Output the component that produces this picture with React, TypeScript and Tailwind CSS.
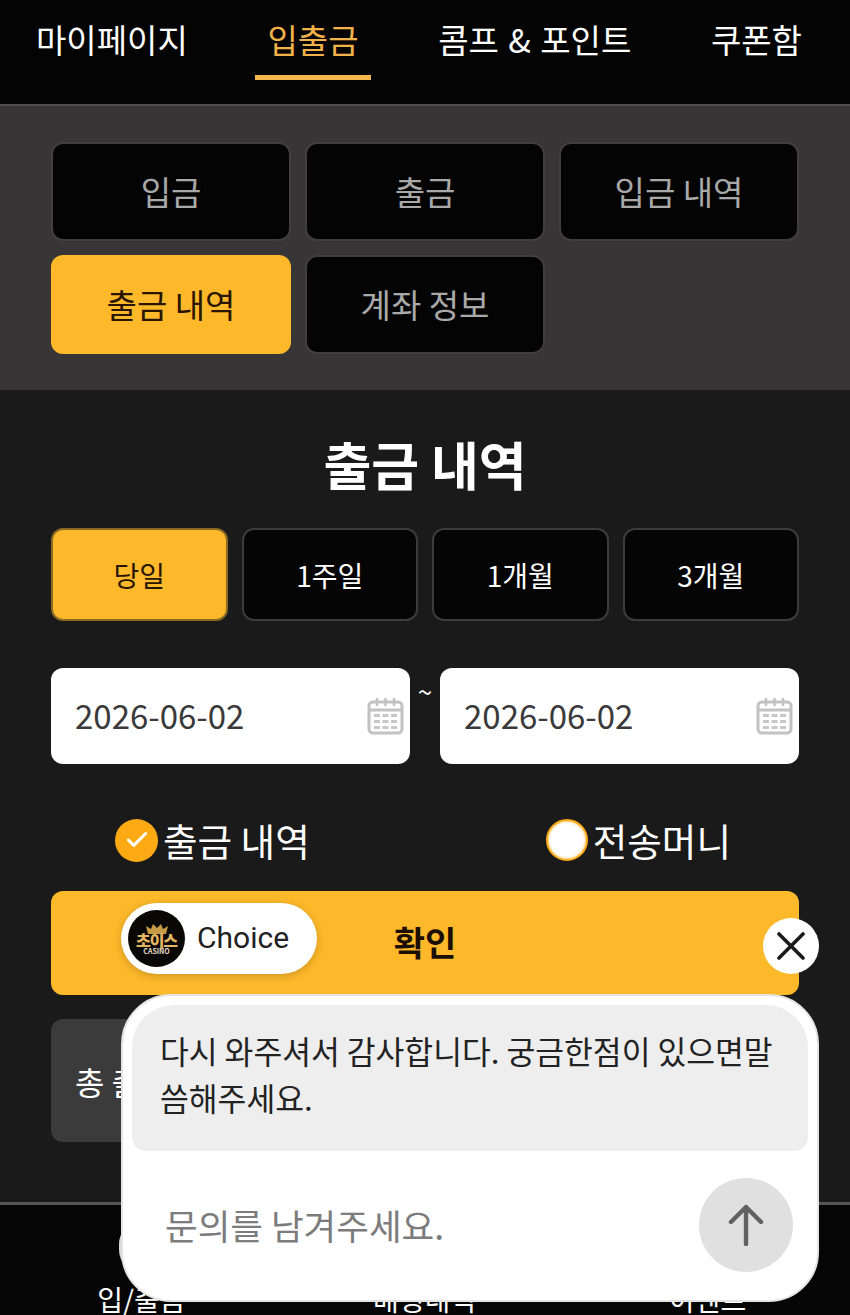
import { Check } from "lucide-react";

const FONT = "font-['Noto_Sans_CJK_KR','Noto_Sans',sans-serif]";

function CalendarIcon() {
  return (
    <svg width="37" height="38" viewBox="0 0 37 38" fill="none" className="shrink-0">
      <rect x="2" y="5" width="33" height="31" rx="4" stroke="#c2c2c2" strokeWidth="3" />
      <path d="M2 13h33" stroke="#c2c2c2" strokeWidth="3" />
      <path d="M10 1v8M18.5 1v8M27 1v8" stroke="#c2c2c2" strokeWidth="2.5" />
      <path
        d="M7 17h6v3H7zM15.5 17h6v3h-6zM24 17h6v3h-6zM7 23h6v3H7zM15.5 23h6v3h-6zM24 23h6v3h-6zM7 29h6v3H7zM15.5 29h6v3h-6zM24 29h6v3h-6z"
        fill="#c8c8c8"
      />
    </svg>
  );
}

function DateField() {
  return (
    <div className="flex h-[96px] w-[359px] items-center justify-between rounded-xl bg-white pl-6 pr-[6px]">
      <span className="pb-[2px] text-[33px] leading-none text-[#3a3a3a]">2026-06-02</span>
      <CalendarIcon />
    </div>
  );
}

function Logo() {
  return (
    <div className="flex h-[57px] w-[57px] shrink-0 flex-col items-center justify-center rounded-full bg-[#0a0806]">
      <svg width="22" height="11" viewBox="0 0 22 11" className="-mb-[2px]">
        <path d="M2 11 0 3l5 3 2-5 4 4 4-4 2 5 5-3-2 8z" fill="#c79a45" />
      </svg>
      <span className="text-[16px] font-black leading-[16px] tracking-[-1px] text-[#e3b662]">초이스</span>
      <span className="-mt-px text-[7px] font-semibold leading-[8px] text-[#e6dcc8]">CASINO</span>
    </div>
  );
}

export default function App() {
  const topTabs = ["마이페이지", "입출금", "콤프 & 포인트", "쿠폰함"];
  const subTabs = ["입금", "출금", "입금 내역", "출금 내역", "계좌 정보"];
  const periods = ["당일", "1주일", "1개월", "3개월"];

  return (
    <div className={`relative flex h-[1315px] w-[850px] flex-col overflow-hidden bg-[#1a1a1a] ${FONT}`}>
      {/* top tabs */}
      <div className="flex h-[106px] shrink-0 justify-between border-b-2 border-[#4d4d4d] bg-[#040404] pb-[26px] pl-[36px] pr-[48px]">
        {topTabs.map((t) => (
          <div
            key={t}
            className={`relative flex items-center whitespace-pre text-[33px] leading-none ${
              t === "입출금" ? "text-[#f2b24a]" : "text-white"
            }`}
          >
            {t === "콤프 & 포인트" ? (
              <>
                콤프 <span className="px-[2px]">&amp;</span> 포인트
              </>
            ) : (
              t
            )}
            {t === "입출금" && <div className="absolute -left-3 -right-3 bottom-[-2px] h-[5px] bg-[#f4b64d]" />}
          </div>
        ))}
      </div>

      {/* sub menu */}
      <div className="grid h-[284px] shrink-0 grid-cols-3 content-start gap-x-[14px] gap-y-[14px] bg-[#373536] px-[51px] pt-[36px]">
        {subTabs.map((t) => (
          <div
            key={t}
            className={`flex h-[99px] items-center justify-center rounded-xl border-2 text-[33px] leading-none ${
              t === "출금 내역"
                ? "border-[#fdb92a] bg-[#fdb92a] text-[#2a1500]"
                : "border-[#403e3f] bg-[#050405] text-[#a9a9a9]"
            }`}
          >
            {t}
          </div>
        ))}
      </div>

      {/* content */}
      <div className="flex h-[813px] shrink-0 flex-col px-[51px]">
        <h1 className="mt-[44px] h-[60px] text-center text-[52px] font-bold leading-[60px] text-white">출금 내역</h1>

        <div className="mt-[34px] grid grid-cols-4 gap-[14px]">
          {periods.map((p) => (
            <div
              key={p}
              className={`flex h-[93px] items-center justify-center rounded-xl border-2 text-[28px] leading-none ${
                p === "당일"
                  ? "border-[#8a6a24] bg-[#fdb92a] text-[#2a1500]"
                  : "border-[#3c3c3c] bg-[#050505] text-white"
              }`}
            >
              {p}
            </div>
          ))}
        </div>

        <div className="mt-[47px] flex items-start justify-between">
          <DateField />
          <span className="mt-[10px] text-[26px] leading-[26px] text-white">~</span>
          <DateField />
        </div>

        <div className="mt-[54px] flex h-[44px] items-center pl-[64px]">
          <div className="flex items-center gap-[5px]">
            <div className="flex h-[43px] w-[43px] items-center justify-center rounded-full bg-[#fdaa14]">
              <Check size={26} strokeWidth={2.8} className="text-white" />
            </div>
            <span className="text-[37.6px] leading-none text-white">출금 내역</span>
          </div>
          <div className="ml-[236px] flex items-center gap-[5px]">
            <div className="h-[42px] w-[42px] rounded-full border-2 border-[#fdaa14] bg-white shadow-[inset_0_0_3px_#fdaa14]" />
            <span className="text-[37.6px] leading-none text-white">전송머니</span>
          </div>
        </div>

        <div className="mt-[29px] flex h-[104px] w-[748px] shrink-0 items-center justify-center rounded-xl bg-[#fdb92a] pb-[2px] text-[34px] font-bold leading-none text-[#1c0e00]">
          확인
        </div>

        <div className="mt-[24px] flex h-[123px] w-[748px] shrink-0 items-center rounded-xl bg-[#3b3b3b] px-6 text-[32px] leading-none text-white">
          총 출금 금액
        </div>
      </div>

      {/* bottom nav, mostly under the chat */}
      <div className="absolute inset-x-0 top-[1202px] flex h-[113px] items-start border-t-[3px] border-[#565656] bg-[#060606] text-[28px] leading-none text-white">
        <div className="flex w-[283px] flex-col items-center">
          <div className="mt-[16px] h-[52px] w-[46px] rounded-full bg-[#d6d6d6]" />
          <span className="mt-[12px]">입/출금</span>
        </div>
        <div className="flex w-[283px] flex-col items-center">
          <div className="mt-[16px] h-[52px]" />
          <span className="mt-[12px]">배팅내역</span>
        </div>
        <div className="flex w-[283px] flex-col items-center">
          <div className="mt-[16px] h-[52px]" />
          <span className="mt-[12px]">이벤트</span>
        </div>
      </div>

      {/* chat launcher pill */}
      <div className="absolute left-[121px] top-[903px] flex h-[71px] w-[196px] items-center gap-3 rounded-full bg-white pl-[7px] shadow-[0_2px_8px_rgba(0,0,0,0.2)]">
        <Logo />
        <span className="pb-[2px] font-['Roboto',sans-serif] text-[30px] leading-none text-[#222]">Choice</span>
      </div>

      {/* close */}
      <div className="absolute left-[763px] top-[918px] flex h-[56px] w-[56px] items-center justify-center rounded-full bg-white">
        <svg width="28" height="28" viewBox="0 0 28 28" fill="none">
          <path d="M2 2l24 24M26 2 2 26" stroke="#1a1a1a" strokeWidth="3.6" strokeLinecap="round" />
        </svg>
      </div>

      {/* chat widget */}
      <div className="absolute left-[121px] top-[994px] h-[308px] w-[698px] rounded-[50px] border-2 border-[#e4e4e4] bg-white">
        <div className="ml-[9px] mt-[9px] h-[146px] w-[676px] whitespace-nowrap rounded-b-[14px] rounded-t-[42px] bg-[#eeeeee] pl-[28px] pt-[22px] text-[31.3px] leading-[47px] text-[#222]">
          다시 와주셔서 감사합니다. 궁금한점이 있으면말
          <br />
          씀해주세요.
        </div>
        <div className="mt-[27px] flex items-center justify-between pl-[42px] pr-[24px]">
          <span className="text-[35.5px] leading-none text-[#7c7c7c]">문의를 남겨주세요.</span>
          <div className="flex h-[94px] w-[94px] items-center justify-center rounded-full bg-[#e0e0e0]">
            <svg width="36" height="42" viewBox="0 0 36 42" fill="none">
              <path d="M18 40V3M3 18 18 3l15 15" stroke="#616161" strokeWidth="4.4" strokeLinecap="round" strokeLinejoin="round" />
            </svg>
          </div>
        </div>
      </div>
    </div>
  );
}
